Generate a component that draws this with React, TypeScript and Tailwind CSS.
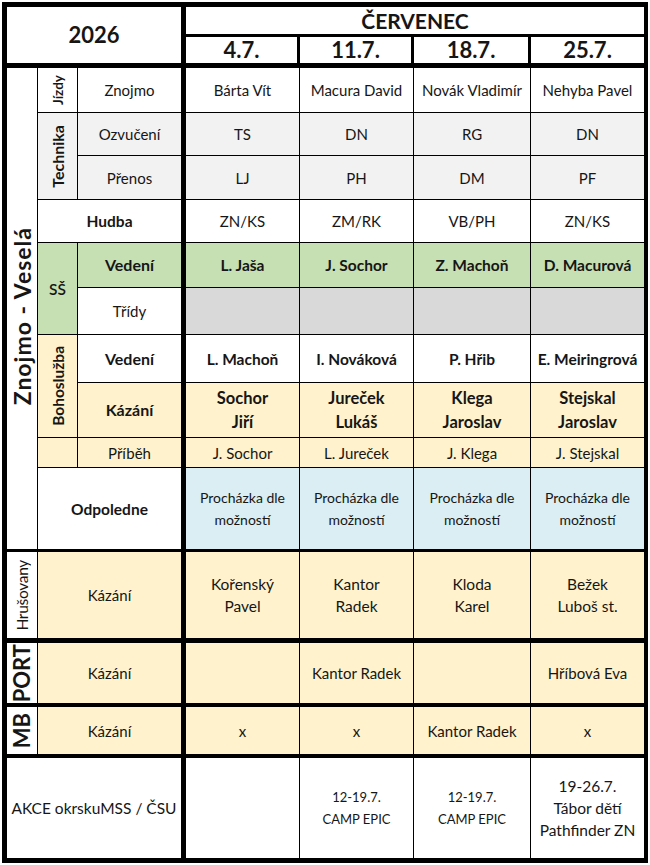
import React from 'react'

type CellProps = {
  className?: string
  children?: React.ReactNode
}

function Cell({ className = '', children }: CellProps) {
  return (
    <div className={'flex items-center justify-center text-center border-black leading-[22px] ' + className}>
      {children}
    </div>
  )
}

function Vertical({ className = '', children }: CellProps) {
  return <span className={'[writing-mode:vertical-rl] rotate-180 whitespace-nowrap ' + className}>{children}</span>
}

const dates = ['4.7.', '11.7.', '18.7.', '25.7.']

// one entry per body row, four week columns
const rows = {
  jizdy: ['Bárta Vít', 'Macura David', 'Novák Vladimír', 'Nehyba Pavel'],
  ozvuceni: ['TS', 'DN', 'RG', 'DN'],
  prenos: ['LJ', 'PH', 'DM', 'PF'],
  hudba: ['ZN/KS', 'ZM/RK', 'VB/PH', 'ZN/KS'],
  ssVedeni: ['L. Jaša', 'J. Sochor', 'Z. Machoň', 'D. Macurová'],
  tridy: ['', '', '', ''],
  bohVedeni: ['L. Machoň', 'I. Nováková', 'P. Hřib', 'E. Meiringrová'],
  kazani: [['Sochor', 'Jiří'], ['Jureček', 'Lukáš'], ['Klega', 'Jaroslav'], ['Stejskal', 'Jaroslav']],
  pribeh: ['J. Sochor', 'L. Jureček', 'J. Klega', 'J. Stejskal'],
  hrusovany: [['Kořenský', 'Pavel'], ['Kantor', 'Radek'], ['Kloda', 'Karel'], ['Bežek', 'Luboš st.']],
  port: ['', 'Kantor Radek', '', 'Hříbová Eva'],
  mb: ['x', 'x', 'Kantor Radek', 'x'],
  akce: [[], ['12-19.7.', 'CAMP EPIC'], ['12-19.7.', 'CAMP EPIC'], ['19-26.7.', 'Tábor dětí', 'Pathfinder ZN']],
}

function Lines({ lines }: { lines: string[] }) {
  return (
    <div className="flex flex-col">
      {lines.map((l, i) => (
        <span key={i}>{l}</span>
      ))}
    </div>
  )
}

// right border of a week cell: thin between weeks, none on the last one (outer frame)
function weekBorder(i: number) {
  return i < 3 ? 'border-r' : ''
}

export default function App() {
  return (
    <div className="min-h-screen bg-white pt-[2px] pl-[2px] text-[15px] text-[#161616]" style={{ fontFamily: 'Lato, "Noto Sans", sans-serif' }}>
      <div className="grid w-[646px] border-black border-t-[5px] border-l-[5px] border-b-[5px] border-r-[4px] grid-cols-[31px_40px_108px_114px_114px_117px_113px] grid-rows-[30px_31px_45px_43px_44px_43px_45px_47px_48px_55px_30px_84px_91px_64px_51px_100px]">
        {/* Header */}
        <Cell className="col-start-1 col-span-3 row-start-1 row-span-2 border-r-[5px] border-b-[5px] text-[22px] font-bold">
          2026
        </Cell>
        <Cell className="col-start-4 col-span-4 row-start-1 border-b-[3px] text-[21px] font-bold">
          ČERVENEC
        </Cell>
        {dates.map((d, i) => (
          <Cell key={d} className={'row-start-2 border-b-[5px] text-[22px] font-bold ' + (i < 3 ? 'border-r-[3px]' : '')}>
            {d}
          </Cell>
        ))}

        {/* Znojmo - Veselá */}
        <Cell className="col-start-1 row-start-3 row-span-10 border-r border-b-[3px]">
          <Vertical className="text-[23px] font-bold tracking-[1px] pb-4">Znojmo - Veselá</Vertical>
        </Cell>

        {/* Jízdy */}
        <Cell className="col-start-2 row-start-3 border-r border-b">
          <Vertical className="text-[13.5px] font-bold">Jízdy</Vertical>
        </Cell>
        <Cell className="col-start-3 row-start-3 border-r-[5px] border-b">Znojmo</Cell>
        {rows.jizdy.map((v, i) => (
          <Cell key={i} className={'row-start-3 border-b ' + weekBorder(i)}>{v}</Cell>
        ))}

        {/* Technika */}
        <Cell className="col-start-2 row-start-4 row-span-2 border-r border-b bg-[#f2f2f2]">
          <Vertical className="text-[16px] font-bold">Technika</Vertical>
        </Cell>
        <Cell className="col-start-3 row-start-4 border-r-[5px] border-b bg-[#f2f2f2]">Ozvučení</Cell>
        {rows.ozvuceni.map((v, i) => (
          <Cell key={i} className={'row-start-4 border-b bg-[#f2f2f2] ' + weekBorder(i)}>{v}</Cell>
        ))}
        <Cell className="col-start-3 row-start-5 border-r-[5px] border-b bg-[#f2f2f2]">Přenos</Cell>
        {rows.prenos.map((v, i) => (
          <Cell key={i} className={'row-start-5 border-b bg-[#f2f2f2] ' + weekBorder(i)}>{v}</Cell>
        ))}

        {/* Hudba */}
        <Cell className="col-start-2 col-span-2 row-start-6 border-r-[5px] border-b font-bold text-[15.5px]">Hudba</Cell>
        {rows.hudba.map((v, i) => (
          <Cell key={i} className={'row-start-6 border-b ' + weekBorder(i)}>{v}</Cell>
        ))}

        {/* SŠ */}
        <Cell className="col-start-2 row-start-7 row-span-2 border-r border-b bg-[#c6e0b4] font-semibold text-[15.5px]">SŠ</Cell>
        <Cell className="col-start-3 row-start-7 border-r-[5px] border-b bg-[#c6e0b4] font-bold text-[16px]">Vedení</Cell>
        {rows.ssVedeni.map((v, i) => (
          <Cell key={i} className={'row-start-7 border-b bg-[#c6e0b4] font-bold text-[15.5px] ' + weekBorder(i)}>{v}</Cell>
        ))}
        <Cell className="col-start-3 row-start-8 border-r-[5px] border-b">Třídy</Cell>
        {rows.tridy.map((v, i) => (
          <Cell key={i} className={'row-start-8 border-b bg-[#d9d9d9] ' + weekBorder(i)}>{v}</Cell>
        ))}

        {/* Bohoslužba */}
        <Cell className="col-start-2 row-start-9 row-span-2 border-r border-b bg-[#fff2cc]">
          <Vertical className="text-[15.5px] font-bold">Bohoslužba</Vertical>
        </Cell>
        <Cell className="col-start-3 row-start-9 border-r-[5px] border-b font-bold text-[16px]">Vedení</Cell>
        {rows.bohVedeni.map((v, i) => (
          <Cell key={i} className={'row-start-9 border-b font-bold text-[15.5px] ' + weekBorder(i)}>{v}</Cell>
        ))}
        <Cell className="col-start-3 row-start-10 border-r-[5px] border-b bg-[#fff2cc] font-bold text-[16px]">Kázání</Cell>
        {rows.kazani.map((v, i) => (
          <Cell key={i} className={'row-start-10 border-b bg-[#fff2cc] font-bold text-[16.5px] leading-[24px] ' + weekBorder(i)}>
            <Lines lines={v} />
          </Cell>
        ))}
        <Cell className="col-start-2 row-start-11 border-r border-b bg-[#fff2cc]" />
        <Cell className="col-start-3 row-start-11 border-r-[5px] border-b bg-[#fff2cc]">Příběh</Cell>
        {rows.pribeh.map((v, i) => (
          <Cell key={i} className={'row-start-11 border-b bg-[#fff2cc] ' + weekBorder(i)}>{v}</Cell>
        ))}

        {/* Odpoledne */}
        <Cell className="col-start-2 col-span-2 row-start-12 border-r-[5px] border-b-[3px] font-bold text-[15.5px]">Odpoledne</Cell>
        {rows.tridy.map((_, i) => (
          <Cell key={i} className={'row-start-12 border-b-[3px] bg-[#daeef3] text-[14px] ' + weekBorder(i)}>
            <Lines lines={['Procházka dle', 'možností']} />
          </Cell>
        ))}

        {/* Hrušovany */}
        <Cell className="col-start-1 row-start-13 border-r border-b-[5px]">
          <Vertical className="text-[15.5px] tracking-[-0.3px]">Hrušovany</Vertical>
        </Cell>
        <Cell className="col-start-2 col-span-2 row-start-13 border-r-[5px] border-b-[5px] bg-[#fff2cc]">Kázání</Cell>
        {rows.hrusovany.map((v, i) => (
          <Cell key={i} className={'row-start-13 border-b-[5px] bg-[#fff2cc] text-[15.5px] ' + weekBorder(i)}>
            <Lines lines={v} />
          </Cell>
        ))}

        {/* PORT */}
        <Cell className="col-start-1 row-start-14 border-r border-b-[4px]">
          <Vertical className="text-[22px] font-bold">PORT</Vertical>
        </Cell>
        <Cell className="col-start-2 col-span-2 row-start-14 border-r-[5px] border-b-[4px] bg-[#fff2cc]">Kázání</Cell>
        {rows.port.map((v, i) => (
          <Cell key={i} className={'row-start-14 border-b-[4px] bg-[#fff2cc] ' + weekBorder(i)}>{v}</Cell>
        ))}

        {/* MB */}
        <Cell className="col-start-1 row-start-15 border-r border-b-[4px]">
          <Vertical className="text-[22px] font-bold">MB</Vertical>
        </Cell>
        <Cell className="col-start-2 col-span-2 row-start-15 border-r-[5px] border-b-[4px] bg-[#fff2cc]">Kázání</Cell>
        {rows.mb.map((v, i) => (
          <Cell key={i} className={'row-start-15 border-b-[4px] bg-[#fff2cc] ' + weekBorder(i)}>{v}</Cell>
        ))}

        {/* AKCE */}
        <Cell className="col-start-1 col-span-3 row-start-16 border-r-[5px] whitespace-nowrap text-[15.5px]">AKCE okrskuMSS / ČSU</Cell>
        {rows.akce.map((v, i) => (
          <Cell key={i} className={'row-start-16 ' + (v.length === 2 ? 'text-[13px] ' : 'text-[15.5px] ') + weekBorder(i)}>
            <Lines lines={v} />
          </Cell>
        ))}
      </div>
    </div>
  )
}
